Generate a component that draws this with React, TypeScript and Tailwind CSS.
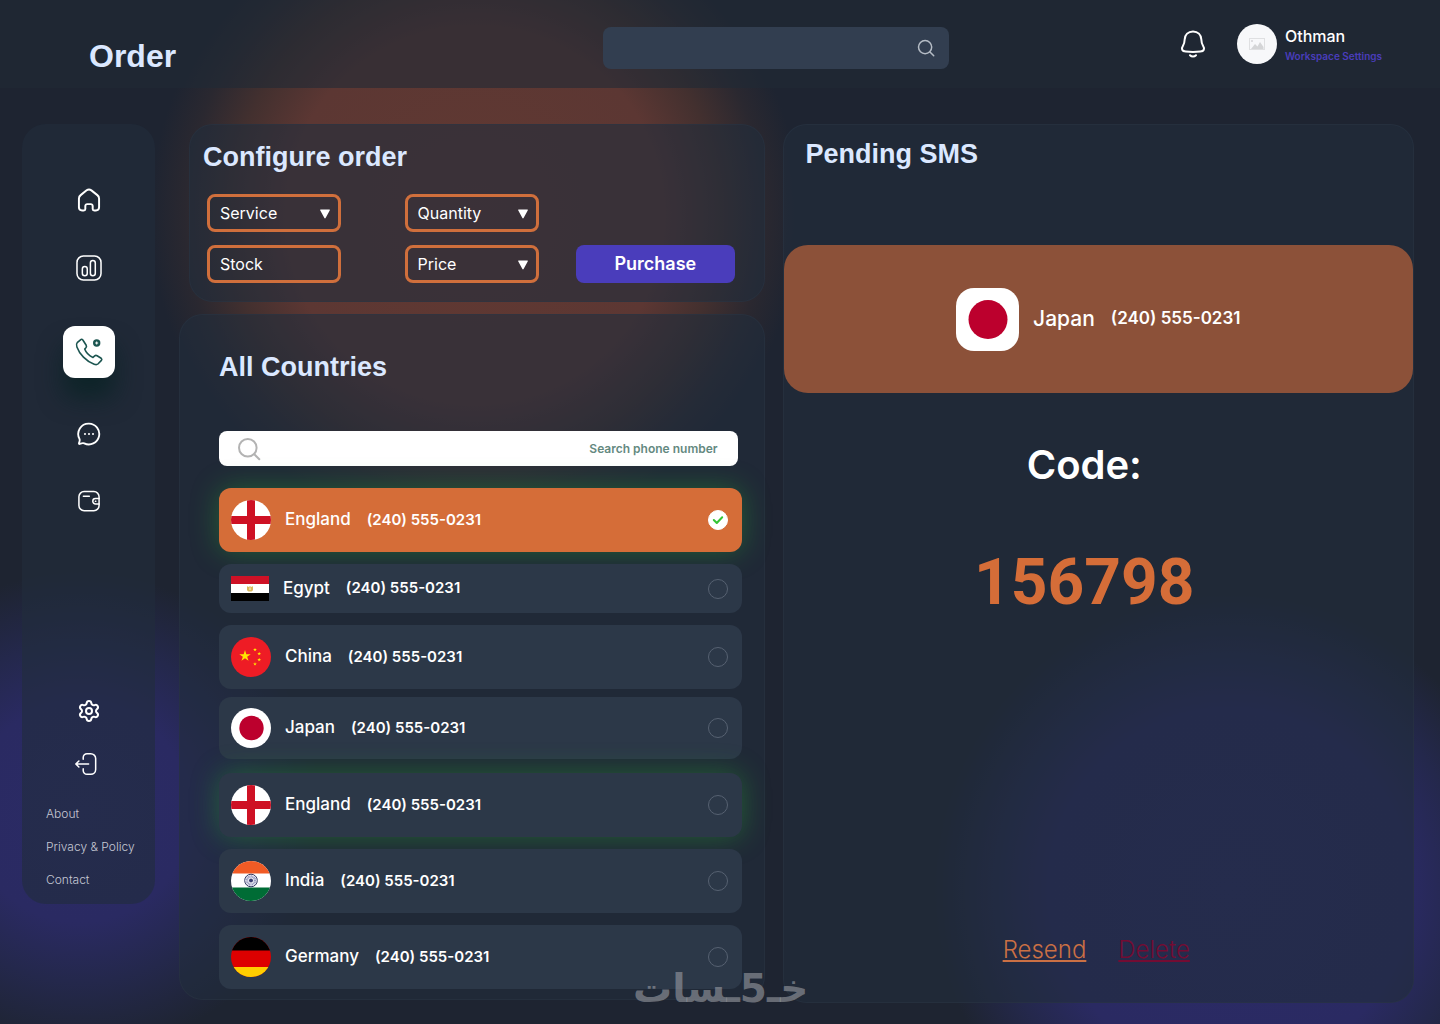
import { useState, type ReactNode } from 'react';
import { clsx } from 'clsx';
import { Settings } from 'lucide-react';

type FlagName = 'england' | 'egypt' | 'china' | 'japan' | 'india' | 'germany';

interface Country {
  id: string;
  name: string;
  flag: FlagName;
  phone: string;
  rowClass: string;
}

const COUNTRIES: Country[] = [
  { id: 'eng-1', name: 'England', flag: 'england', phone: '(240) 555-0231', rowClass: 'h-16 shadow-[0_0_28px_rgba(38,160,50,0.45)]' },
  { id: 'egy', name: 'Egypt', flag: 'egypt', phone: '(240) 555-0231', rowClass: 'mt-3 h-[49px]' },
  { id: 'chn', name: 'China', flag: 'china', phone: '(240) 555-0231', rowClass: 'mt-3 h-16' },
  { id: 'jpn', name: 'Japan', flag: 'japan', phone: '(240) 555-0231', rowClass: 'mt-2 h-[62px]' },
  { id: 'eng-2', name: 'England', flag: 'england', phone: '(240) 555-0231', rowClass: 'mt-3.5 h-16 shadow-[0_0_28px_rgba(38,160,50,0.45)]' },
  { id: 'ind', name: 'India', flag: 'india', phone: '(240) 555-0231', rowClass: 'mt-3 h-16' },
  { id: 'ger', name: 'Germany', flag: 'germany', phone: '(240) 555-0231', rowClass: 'mt-3 h-16' },
];

const PANEL = 'rounded-3xl border border-[#2a3644]/50 bg-[#222d3c]/60';
const HEADING = "font-['Liberation_Sans',sans-serif] text-[27px] leading-8 font-bold text-[#dbe8ff]";
const FIELD =
  'h-[38px] w-full appearance-none rounded-lg border-[3px] border-[#d06f3c] bg-transparent pl-2.5 text-base text-white placeholder:text-white placeholder:opacity-100 focus:outline-none';

function Svg({ size, stroke = 1.5, children, className }: { size: number; stroke?: number; children: ReactNode; className?: string }) {
  return (
    <svg
      width={size}
      height={size}
      viewBox="0 0 24 24"
      fill="none"
      stroke="currentColor"
      strokeWidth={stroke}
      strokeLinecap="round"
      strokeLinejoin="round"
      aria-hidden="true"
      className={className}
    >
      {children}
    </svg>
  );
}

function HomeIcon() {
  return (
    <Svg size={26} stroke={1.8}>
      <path d="M2.7 10.6c0-1.3.6-2.3 1.6-3.1l5.5-4.4c1.3-1 3.1-1 4.4 0l5.5 4.4c1 .8 1.6 1.8 1.6 3.1v8.2a2.900 2.900 0 0 1-2.900 2.900h-1.600a1.400 1.400 0 0 1-1.400-1.400v-2.800a1.700 1.700 0 0 0-1.700-1.700h-3.400a1.700 1.700 0 0 0-1.700 1.700v2.800a1.400 1.400 0 0 1-1.400 1.400H5.600a2.900 2.900 0 0 1-2.900-2.900z" />
    </Svg>
  );
}

function ChartIcon() {
  return (
    <Svg size={28} stroke={1.3}>
      <rect x="1.7" y="1.7" width="20.6" height="20.6" rx="5.5" />
      <rect x="6.3" y="10.8" width="4.2" height="7.8" rx="2.1" />
      <rect x="13.2" y="5.6" width="4.2" height="13" rx="2.1" />
    </Svg>
  );
}

function PhoneIcon() {
  return (
    <svg width="30" height="30" viewBox="0 0 30 30" fill="none" stroke="#1c5550" strokeWidth="1.6" strokeLinejoin="round" aria-hidden="true">
      <path d="M6.5 2.8 3.2 5.7c-1 1-.8 2.8-.3 4.2C5.5 17 12 24.3 20.2 27.2c1.400.5 2.700.6 3.700-.2l3.500-3.600c.6-.7.5-1.500-.2-2.100l-4.100-2.600c-.9-.5-1.700-.4-2.400.2l-1.700 1.500c-3.600-1.500-7.100-4.900-8.300-8.300l1.200-1.300c.7-.8.8-1.600.3-2.500L9 3.200c-.6-1-1.600-1.200-2.500-.4z" />
      <circle cx="22.7" cy="6" r="3.7" fill="#1c5550" stroke="none" />
      <path d="M22.7 4.5v3M21.2 6h3" stroke="#fff" strokeWidth="1" />
    </svg>
  );
}

function ChatIcon() {
  return (
    <Svg size={26} stroke={1.7}>
      <path d="M12 2.4a9.6 9.6 0 1 1-4.4 18.2c-.6-.3-1-.3-1.6-.1l-2.5.7c-.6.2-.9-.2-.7-.7l.6-2.4c.1-.6 0-1-.2-1.6A9.6 9.6 0 0 1 12 2.4z" />
      <path d="M8.3 12h.01M12 12h.01M15.7 12h.01" strokeWidth="1.9" />
    </Svg>
  );
}

function WalletIcon() {
  return (
    <Svg size={26} stroke={1.4}>
      <rect x="2.7" y="3.3" width="18.6" height="17.6" rx="4.8" />
      <path d="M6.8 7.6h5.5M21.3 9.7H18a2.5 2.5 0 0 0 0 5h3.3M17.9 12.2h.4" />
    </Svg>
  );
}

function LogoutIcon() {
  return (
    <Svg size={26} stroke={1.4} className="-scale-x-100">
      <path d="M15.5 7.5V6A3.5 3.5 0 0 0 12 2.5H8.5A4.5 4.5 0 0 0 4 7v10a4.5 4.5 0 0 0 4.5 4.5H12a3.5 3.5 0 0 0 3.5-3.5v-1.5M10.5 12H22M19.5 9.2l2.8 2.8-2.8 2.8" />
    </Svg>
  );
}

function BellIcon() {
  return (
    <svg width="26" height="30" viewBox="0 0 26 30" fill="none" stroke="#fff" strokeWidth="2" strokeLinecap="round" aria-hidden="true">
      <path d="M13 2.5c-5 0-8 3.4-8.3 7.7-.2 3.4-.5 4.6-1.6 6.3-2.3 3.5-1 5.8 2.6 6.1 4.9.5 9.7.5 14.6 0 3.6-.3 4.9-2.6 2.6-6.1-1.1-1.7-1.4-2.9-1.6-6.3C21 5.9 18 2.5 13 2.5z" />
      <path d="M10 26.3c1.7 1.7 4.3 1.7 6 0" />
    </svg>
  );
}

function SearchIcon({ size, className }: { size: number; className?: string }) {
  return (
    <Svg size={size} stroke={2} className={className}>
      <circle cx="10.8" cy="10.8" r="8.8" />
      <path d="m17.3 17.3 5 5" />
    </Svg>
  );
}

function Star({ x, y, r }: { x: number; y: number; r: number }) {
  return (
    <polygon
      points="0,-10 2.2,-3.1 9.5,-3.1 3.6,1.2 5.9,8.1 0,3.8 -5.9,8.1 -3.6,1.2 -9.5,-3.1 -2.2,-3.1"
      transform={`translate(${x} ${y}) scale(${r / 10})`}
      fill="#ffe600"
    />
  );
}

function Flag({ name }: { name: FlagName }) {
  if (name === 'egypt') {
    return (
      <svg width="38" height="25" viewBox="0 0 38 25" aria-hidden="true">
        <rect width="38" height="25" fill="#fff" />
        <rect width="38" height="8" fill="#ce1126" />
        <rect y="17" width="38" height="8" fill="#000" />
        <path d="M16 10.2l2 .8 1-1 1 1 2-.8v4l-1.5 1.3h-3L16 14.2z" fill="#d9b95c" />
        <path d="M18.3 11.5h1.4V14h-1.4z" fill="#f3e4b4" />
      </svg>
    );
  }
  return (
    <svg width="40" height="40" viewBox="0 0 40 40" className="rounded-full" aria-hidden="true">
      {name === 'england' && (
        <>
          <rect width="40" height="40" fill="#fff" />
          <path d="M16 0h8v40h-8zM0 16h40v8H0z" fill="#ce1124" />
        </>
      )}
      {name === 'china' && (
        <>
          <rect width="40" height="40" fill="#ee1c25" />
          <Star x={14} y={19} r={6} />
          <Star x={24} y={12.7} r={2} />
          <Star x={28.2} y={16.7} r={2} />
          <Star x={28.2} y={22.7} r={2} />
          <Star x={24} y={27} r={2} />
        </>
      )}
      {name === 'japan' && (
        <>
          <rect width="40" height="40" fill="#fff" />
          <circle cx="20.5" cy="20" r="12.2" fill="#bc002d" />
        </>
      )}
      {name === 'india' && (
        <>
          <rect width="40" height="40" fill="#fff" />
          <rect width="40" height="12.5" fill="#f15b25" />
          <rect y="26.5" width="40" height="13.5" fill="#006c35" />
          <circle cx="20" cy="19.5" r="6.3" fill="none" stroke="#2e3560" strokeWidth="1" />
          <circle cx="20" cy="19.5" r="4" fill="none" stroke="#9a9dc2" strokeWidth="2.5" strokeDasharray="1 .4" />
          <circle cx="20" cy="19.5" r="2" fill="#3a3f72" />
        </>
      )}
      {name === 'germany' && (
        <>
          <rect width="40" height="40" fill="#dd0000" />
          <rect width="40" height="13.5" fill="#000" />
          <rect y="30" width="40" height="10" fill="#ffce00" />
        </>
      )}
    </svg>
  );
}

function SelectField({ label }: { label: string }) {
  return (
    <div className="relative w-[134px]">
      <select aria-label={label} defaultValue={label} className={FIELD}>
        <option>{label}</option>
      </select>
      <svg width="10" height="10" viewBox="0 0 10 10" aria-hidden="true" className="pointer-events-none absolute top-[15px] right-[11px]">
        <path d="M.8.5h8.4c.6 0 .8.5.5 1L5.6 9c-.3.5-.9.5-1.2 0L.3 1.5C0 1 .2.5.8.5z" fill="#fff" />
      </svg>
    </div>
  );
}

function CountryRow({ country, selected, onSelect }: { country: Country; selected: boolean; onSelect: () => void }) {
  return (
    <li>
      <label
        className={clsx(
          'flex cursor-pointer items-center rounded-xl pr-3.5 pl-3 text-white',
          selected ? 'bg-[#d56d38]' : 'bg-[#2c3848]',
          country.rowClass,
        )}
      >
        <Flag name={country.flag} />
        <span className="ml-3.5 text-[17px] font-medium">{country.name}</span>
        <span className="ml-4 text-[15px] font-semibold">{country.phone}</span>
        <span className="relative ml-auto size-5">
          <input
            type="radio"
            name="country"
            checked={selected}
            onChange={onSelect}
            className="block size-5 appearance-none rounded-full border border-[#566171] checked:border-white checked:bg-white"
          />
          {selected && (
            <svg width="20" height="20" viewBox="0 0 20 20" fill="none" aria-hidden="true" className="pointer-events-none absolute inset-0">
              <path d="m5.8 10 3 3 5.4-5.8" stroke="#35c435" strokeWidth="2" strokeLinecap="round" strokeLinejoin="round" />
            </svg>
          )}
        </span>
      </label>
    </li>
  );
}

function Header() {
  return (
    <header className="relative grid h-22 grid-cols-[514fr_346fr_433fr] items-center bg-[#1f2935]/60 pr-[58px] pl-[89px]">
      <h1 className="pt-6 font-['Liberation_Sans',sans-serif] text-[32px] leading-10 font-bold text-[#dbe8ff]">Order</h1>
      <div className="pt-2">
        <div className="flex h-[42px] items-center rounded-lg bg-[#323e50] pr-3.5 pl-4">
          <input type="text" aria-label="Search" className="min-w-0 flex-1 bg-transparent text-white focus:outline-none" />
          <SearchIcon size={18} className="text-[#b5bcc5]" />
        </div>
      </div>
      <div className="flex items-center justify-end">
        <button type="button" aria-label="Notifications">
          <BellIcon />
        </button>
        <span className="ml-[31px] flex size-10 items-center justify-center rounded-full bg-[#f7f8fa]">
          <svg width="16" height="12" viewBox="0 0 16 12" aria-hidden="true">
            <rect x=".5" y=".5" width="15" height="11" fill="none" stroke="#dfe0e2" />
            <circle cx="3" cy="3" r="1" fill="#d4d5d7" />
            <path d="M2 11l4-5 2.5 2.5L11 4l3.500 5v2z" fill="#d4d5d7" />
          </svg>
        </span>
        <div className="ml-2">
          <p className="text-base leading-6 font-medium text-white">Othman</p>
          <a href="#workspace" className="block text-[10px] leading-4 font-semibold text-[#4a3dbb]">
            Workspace Settings
          </a>
        </div>
      </div>
    </header>
  );
}

function Sidebar() {
  return (
    <nav aria-label="Main" className="flex w-[133px] shrink-0 flex-col items-center self-start rounded-3xl bg-[#222d3c]/60 pt-[63px] pb-2 text-white">
      <a href="#home" aria-label="Home">
        <HomeIcon />
      </a>
      <a href="#stats" aria-label="Statistics" className="mt-[41px]">
        <ChartIcon />
      </a>
      <a
        href="#numbers"
        aria-label="Phone numbers"
        className="mt-11 flex size-[52px] items-center justify-center rounded-xl bg-white shadow-[0_20px_25px_rgba(5,34,34,0.7)]"
      >
        <PhoneIcon />
      </a>
      <a href="#chat" aria-label="Messages" className="mt-[43px]">
        <ChatIcon />
      </a>
      <a href="#wallet" aria-label="Wallet" className="mt-[41px]">
        <WalletIcon />
      </a>
      <a href="#settings" aria-label="Settings" className="mt-[185px]">
        <Settings size={24} strokeWidth={2} />
      </a>
      <a href="#logout" aria-label="Log out" className="mt-7 mr-1">
        <LogoutIcon />
      </a>
      <div className="mt-5 flex w-full flex-col pl-6 text-xs leading-[33px] font-light text-[#c5c8d4]">
        <a href="#about">About</a>
        <a href="#privacy">Privacy &amp; Policy</a>
        <a href="#contact">Contact</a>
      </div>
    </nav>
  );
}

function ConfigureOrder() {
  return (
    <section className={clsx(PANEL, 'ml-2.5 pt-4 pb-[18px]')}>
      <h2 className={clsx(HEADING, 'pl-[13px]')}>Configure order</h2>
      <form className="mt-[21px] grid grid-cols-[197fr_171fr_158fr] gap-y-[13px] pr-[29px] pl-[17px]" onSubmit={(e) => e.preventDefault()}>
        <SelectField label="Service" />
        <SelectField label="Quantity" />
        <span />
        <div className="w-[134px]">
          <input type="text" aria-label="Stock" placeholder="Stock" className={FIELD} />
        </div>
        <SelectField label="Price" />
        <button type="submit" className="h-[38px] rounded-lg bg-[#4a3dbb] text-lg font-semibold text-white">
          Purchase
        </button>
      </form>
    </section>
  );
}

function AllCountries() {
  const [selectedId, setSelectedId] = useState('eng-1');

  return (
    <section className={clsx(PANEL, 'mt-3 pt-9 pr-[22px] pb-2.5 pl-[39px]')}>
      <h2 className={HEADING}>All Countries</h2>
      <div className="mt-12 mr-1 flex h-[35px] items-center rounded-lg bg-white pr-5 pl-[18px]">
        <SearchIcon size={24} className="text-[#b3b3b3]" />
        <input
          type="text"
          aria-label="Search phone number"
          placeholder="Search phone number"
          className="min-w-0 flex-1 bg-transparent text-right text-xs font-semibold text-[#1f2937] placeholder:text-[#64897f] focus:outline-none"
        />
      </div>
      <ul className="mt-[22px]">
        {COUNTRIES.map((c) => (
          <CountryRow key={c.id} country={c} selected={c.id === selectedId} onSelect={() => setSelectedId(c.id)} />
        ))}
      </ul>
    </section>
  );
}

function PendingSms() {
  return (
    <section className={clsx(PANEL, 'flex min-h-[879px] min-w-0 flex-[631] flex-col pt-[13px]')}>
      <h2 className={clsx(HEADING, 'pl-[22px]')}>Pending SMS</h2>
      <div className="mt-[75px] flex h-[148px] items-center justify-center rounded-3xl bg-[#8c5139] text-white">
        <svg width="63" height="63" viewBox="0 0 63 63" className="rounded-[18px]" aria-hidden="true">
          <rect width="63" height="63" fill="#fff" />
          <circle cx="32" cy="31.5" r="19.5" fill="#bc002d" />
        </svg>
        <span className="ml-3.5 text-[21px] font-medium">Japan</span>
        <span className="ml-4 text-[17px] font-semibold">(240) 555-0231</span>
      </div>
      <div className="pr-7 text-center">
        <p className="mt-12 text-[40px] leading-12 font-semibold text-white">Code:</p>
        <p className="mt-[54px] font-[Roboto,sans-serif] text-[64px] leading-20 font-bold text-[#d56d38]">156798</p>
      </div>
      <div className="mt-auto flex justify-center gap-8 pr-1 pb-9 text-2xl font-light decoration-1 underline-offset-2">
        <button type="button" className="text-[#cb7044] underline">
          Resend
        </button>
        <button type="button" className="text-[#730c33] underline">
          Delete
        </button>
      </div>
    </section>
  );
}

export default function App() {
  return (
    <div className="relative isolate min-h-screen overflow-hidden bg-[#1e2431] font-[Inter,sans-serif]">
      <div className="absolute inset-0 -z-10 bg-[radial-gradient(circle_at_475px_215px,#613932_0,#5c3733_190px,#43302f_245px,#2a2830_290px,#1e243100_325px),radial-gradient(circle_at_80px_812px,#2b2b66_0,#2a2a62_110px,#24284c_170px,#1e243100_240px),radial-gradient(circle_at_1230px_890px,#2b2b66_0,#2a2a62_180px,#24284c_235px,#1e243100_295px)]" />
      <Header />
      <main className="flex gap-6 pt-9 pr-[26px] pb-5 pl-[22px]">
        <Sidebar />
        <div className="flex min-w-0 flex-1 items-start gap-[18px]">
          <div className="min-w-0 flex-[587]">
            <ConfigureOrder />
            <AllCountries />
          </div>
          <PendingSms />
        </div>
      </main>
      <div
        dir="rtl"
        lang="ar"
        className="pointer-events-none absolute bottom-2.5 left-[633px] font-['DejaVu_Sans',sans-serif] text-[39px] leading-[50px] font-bold text-[#9a9da3]/60"
      >
        خـ5ـسات
      </div>
    </div>
  );
}
